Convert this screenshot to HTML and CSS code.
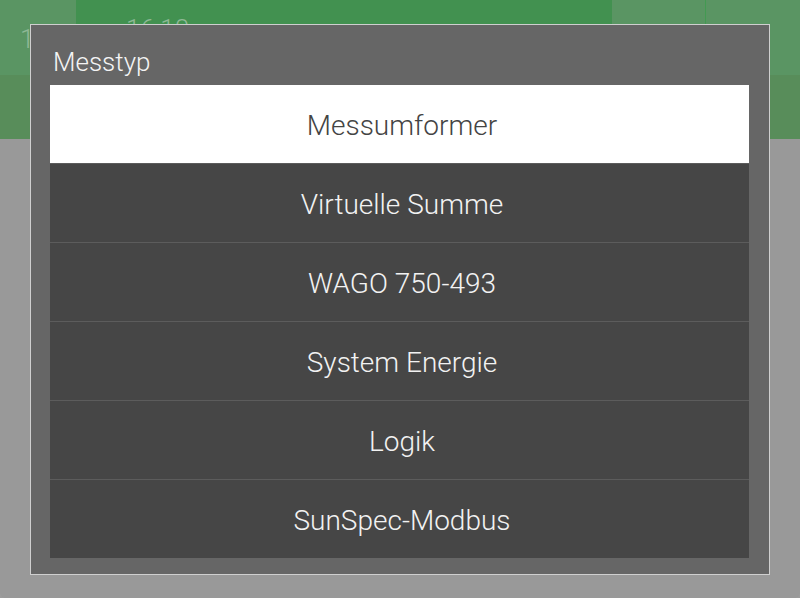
FILE: index.html
```html
<!DOCTYPE html>
<html>
<head>
<meta charset="utf-8">
<link rel="stylesheet" href="styles.css">
</head>
<body>
<div class="screen">
  <div class="topbar">
    <div class="tb-left"><span class="tb-num">1</span></div>
    <div class="tb-mid"><span class="tb-time">16:18</span></div>
    <div class="tb-right1"></div>
    <div class="tb-right2"></div>
  </div>
  <div class="subbar"></div>
  <div class="content"></div>

  <div class="dialog">
    <div class="dialog-title">Messtyp</div>
    <ul class="options">
      <li class="option selected">Messumformer</li>
      <li class="option">Virtuelle Summe</li>
      <li class="option">WAGO 750-493</li>
      <li class="option">System Energie</li>
      <li class="option">Logik</li>
      <li class="option">SunSpec-Modbus</li>
    </ul>
  </div>
</div>
</body>
</html>
```
FILE: styles.css
```css
html, body {
  margin: 0;
  padding: 0;
  background: #9c9c9c;
}
body {
  font-family: Roboto, "Noto Sans", sans-serif;
  font-weight: 300;
}
.screen {
  position: relative;
  width: 800px;
  height: 598px;
  display: flex;
  flex-direction: column;
  background: #999999;
  border-radius: 0 0 6px 6px;
  overflow: hidden;
}
.topbar {
  height: 75px;
  display: flex;
  background: #5a9563;
}
.tb-left {
  width: 76px;
  position: relative;
}
.tb-num {
  position: absolute;
  left: 20px;
  top: 24px;
  font-size: 26px;
  color: #8fb896;
}
.tb-mid {
  width: 536px;
  background: #429150;
  position: relative;
}
.tb-time {
  position: absolute;
  left: 50px;
  top: 14px;
  font-size: 26px;
  color: #8fb896;
}
.tb-right1 {
  width: 93px;
  border-right: 1px solid #439a52;
}
.tb-right2 {
  flex: 1;
}
.subbar {
  height: 64px;
  background: #588d5a;
}
.content {
  flex: 1;
}
.dialog {
  position: absolute;
  left: 30px;
  top: 24px;
  width: 699px;
  padding: 0 20px 16px 19px;
  background: #666666;
  border: 1px solid #cfcfcf;
}
.dialog-title {
  height: 60px;
  box-sizing: border-box;
  padding: 22px 0 0 3px;
  font-size: 26px;
  line-height: 30px;
  color: #f4f4f4;
}
.options {
  list-style: none;
  margin: 0;
  padding: 0;
  background: #464646;
}
.option {
  height: 78px;
  box-sizing: border-box;
  padding: 3px 0 0 5px;
  display: flex;
  align-items: center;
  justify-content: center;
  font-size: 28px;
  color: #f2f2f2;
  border-top: 1px solid #5c5c5c;
}
.option + .option {
  height: 79px;
}
.option:first-child {
  border-top: none;
}
.option.selected {
  background: #ffffff;
  color: #444444;
}
```
